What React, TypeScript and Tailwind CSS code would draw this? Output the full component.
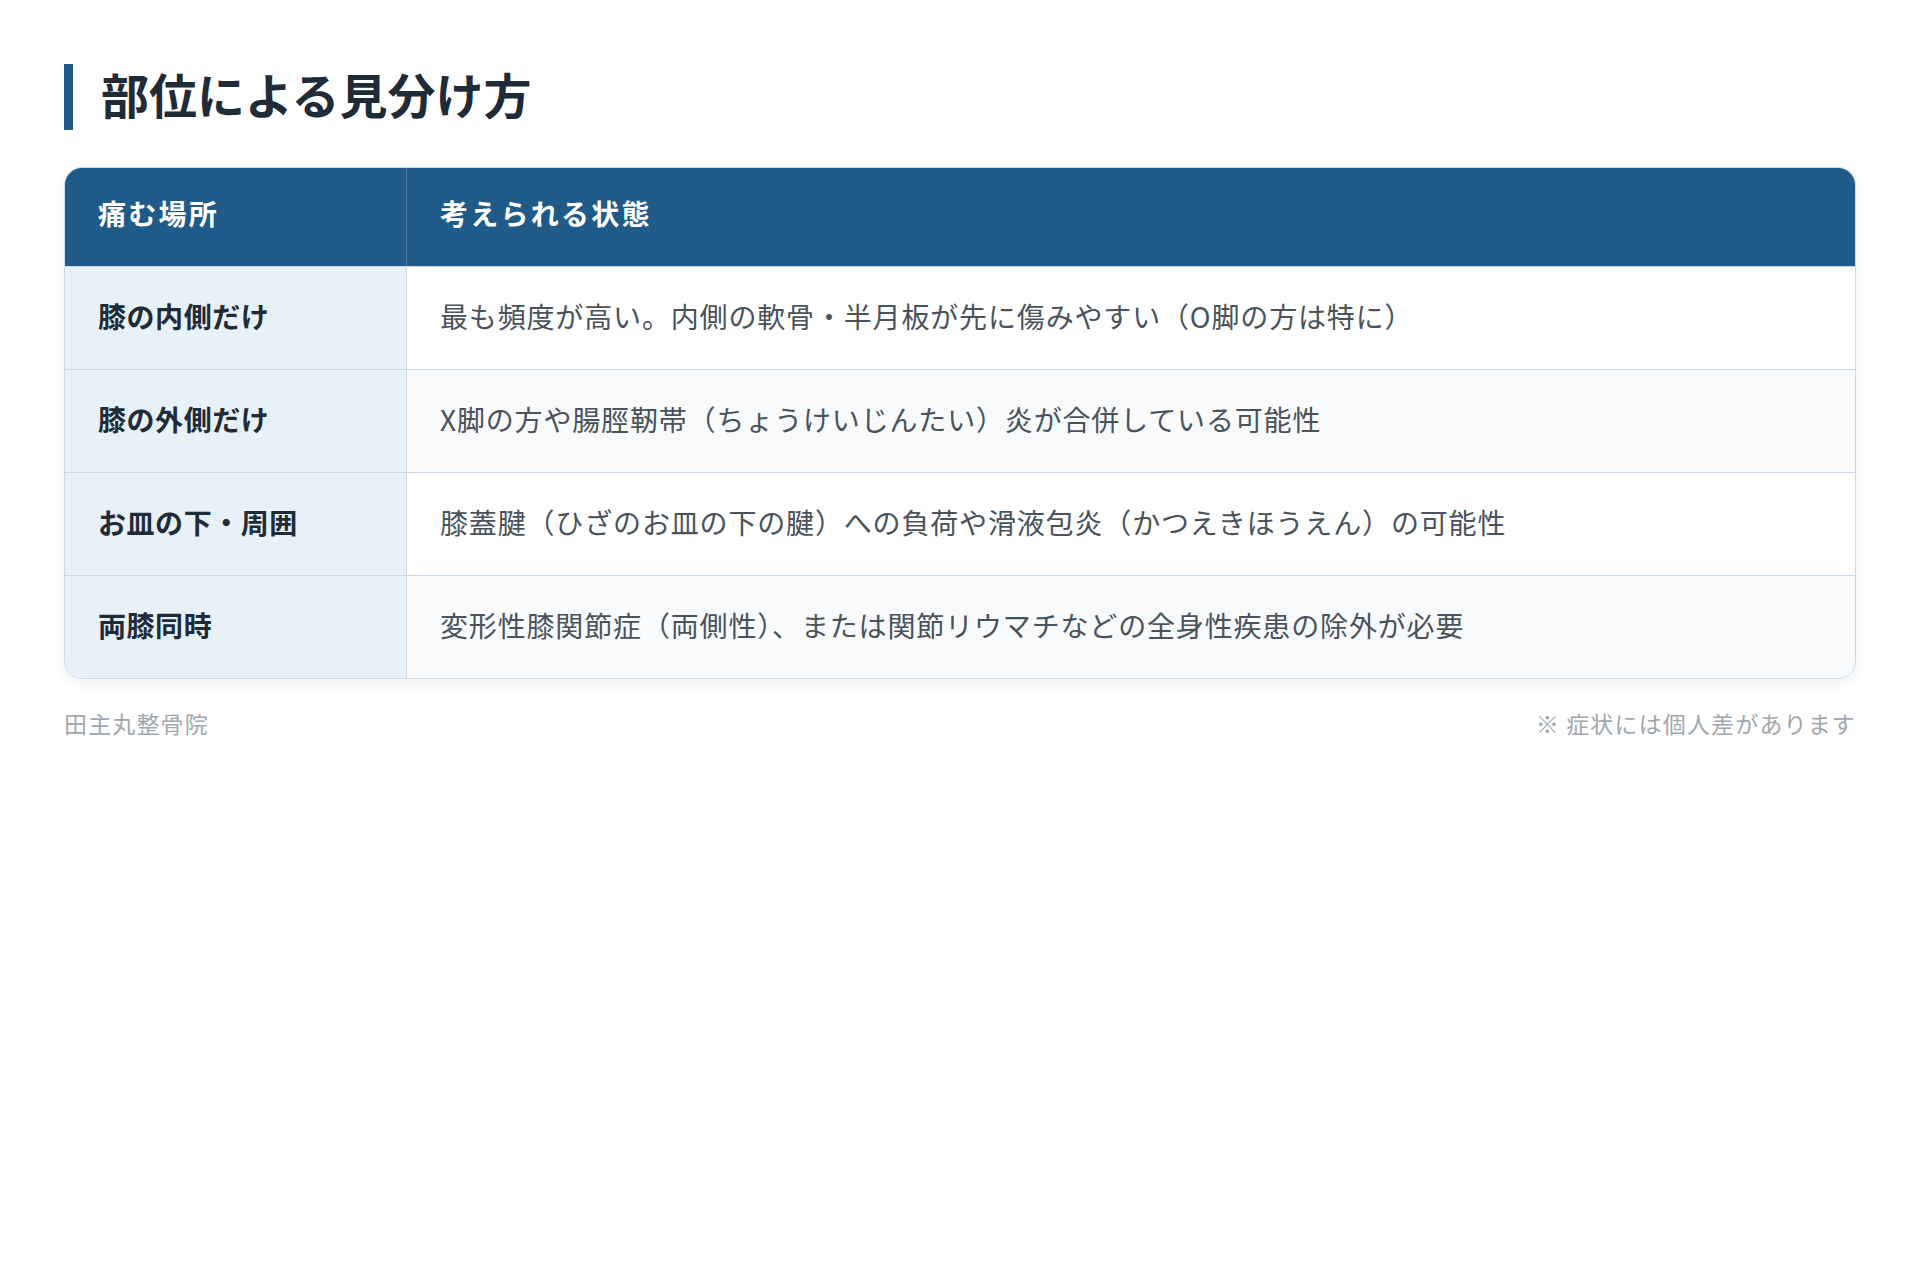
const rows = [
  { place: '膝の内側だけ', state: '最も頻度が高い。内側の軟骨・半月板が先に傷みやすい（O脚の方は特に）' },
  { place: '膝の外側だけ', state: 'X脚の方や腸脛靭帯（ちょうけいじんたい）炎が合併している可能性' },
  { place: 'お皿の下・周囲', state: '膝蓋腱（ひざのお皿の下の腱）への負荷や滑液包炎（かつえきほうえん）の可能性' },
  { place: '両膝同時', state: '変形性膝関節症（両側性）、または関節リウマチなどの全身性疾患の除外が必要' },
];

export default function App() {
  return (
    <div
      className="min-h-[1280px] bg-white px-[64px] pt-[64px]"
      style={{ fontFamily: '"Noto Sans CJK JP", "Noto Sans", sans-serif' }}
    >
      <div className="flex items-center gap-[28px]">
        <div className="w-[9px] h-[66px] bg-[#1f5a89]" />
        <h1 className="mb-[9px] text-[48px] leading-none font-bold text-[#1f2b37]">部位による見分け方</h1>
      </div>

      <div className="mt-[37px] rounded-[18px] border border-[#cad9e6] overflow-hidden shadow-[0_4px_14px_rgba(30,60,90,0.08)]">
        <div className="flex bg-[#1f5a89] text-white">
          <div className="w-[342px] shrink-0 px-[33px] pt-[24px] pb-[32px] text-[28px] leading-[42px] font-bold tracking-[0.08em] border-r border-[#4a7aa2]">
            痛む場所
          </div>
          <div className="flex-1 px-[33px] pt-[24px] pb-[32px] text-[28px] leading-[42px] font-bold tracking-[0.08em]">
            考えられる状態
          </div>
        </div>
        {rows.map((row, i) => (
          <div key={i} className="flex border-t border-[#cad9e6]">
            <div className="w-[342px] shrink-0 bg-[#e8f0f8] px-[33px] pt-[28px] pb-[32px] text-[28px] leading-[42px] font-bold tracking-[0.02em] text-[#1f2b37] border-r border-[#cad9e6]">
              {row.place}
            </div>
            <div
              className={`flex-1 px-[33px] pt-[28px] pb-[32px] text-[28px] leading-[42px] tracking-[0.03em] text-[#4a525b] ${
                i % 2 === 1 ? 'bg-[#f8fafc]' : 'bg-white'
              }`}
            >
              {row.state}
            </div>
          </div>
        ))}
      </div>

      <div className="mt-[26px] flex justify-between text-[23px] leading-[36px] text-[#a0a7ae] tracking-[0.05em]">
        <span>田主丸整骨院</span>
        <span>※ 症状には個人差があります</span>
      </div>
    </div>
  );
}
